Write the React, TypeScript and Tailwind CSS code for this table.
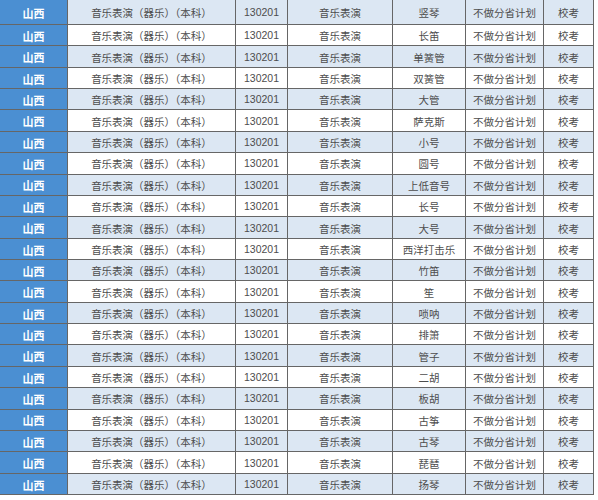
import React from 'react';

const INSTRUMENTS = [
  '竖琴', '长笛', '单簧管', '双簧管', '大管', '萨克斯', '小号', '圆号',
  '上低音号', '长号', '大号', '西洋打击乐', '竹笛', '笙', '唢呐', '排箫',
  '管子', '二胡', '板胡', '古筝', '古琴', '琵琶', '扬琴',
];

const cell = 'flex items-center justify-center pt-[2px] border-r border-b border-[#666] overflow-hidden whitespace-nowrap';

const App: React.FC = () => {
  return (
    <div className="w-[598px] h-[500px] bg-white overflow-hidden">
      <div
        className="grid grid-cols-[68px_168px_52px_105px_73px_78px_50px] grid-rows-[25px_repeat(22,minmax(0,1fr))] w-[594px] h-[495px] text-[10.5px] text-[#4d4d4d] font-['Noto_Sans_CJK_SC','Noto_Sans',sans-serif]"
      >
        {INSTRUMENTS.map((name, i) => {
          const band = i % 2 === 0 ? 'bg-[#dce7f3]' : 'bg-white';
          return (
            <React.Fragment key={name}>
              <div className={`${cell} bg-[#4b8fd2] text-white font-bold text-[11px]`}>山西</div>
              <div className={`${cell} ${band}`}>音乐表演（器乐）（本科）</div>
              <div className={`${cell} ${band} font-['Liberation_Sans',sans-serif] text-[10.5px]`}>130201</div>
              <div className={`${cell} ${band}`}>音乐表演</div>
              <div className={`${cell} ${band}`}>{name}</div>
              <div className={`${cell} ${band}`}>不做分省计划</div>
              <div className={`${cell} ${band}`}>校考</div>
            </React.Fragment>
          );
        })}
      </div>
    </div>
  );
};

export default App;
